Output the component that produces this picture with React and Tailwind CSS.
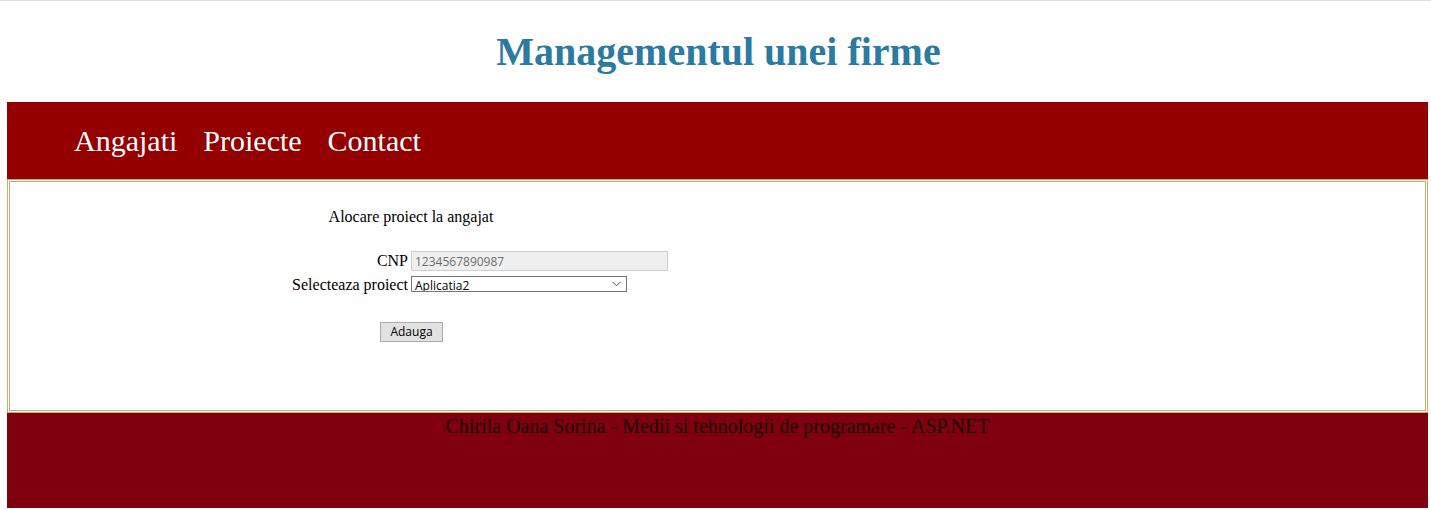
import React from 'react';

const serif = "font-['Liberation_Serif','Times_New_Roman',serif]";
const sans = "font-['Open_Sans','Noto_Sans',sans-serif]";

function Field({ label, children }) {
  return (
    <div className="flex items-baseline">
      <span className="w-[120px] shrink-0 whitespace-nowrap text-right text-[16px] leading-none pr-[3px]">{label}</span>
      {children}
    </div>
  );
}

export default function App() {
  return (
    <div className={`min-h-screen bg-white border-t border-[#dedede] ${serif}`}>
      {/* titlu */}
      <header className="h-[101px] pt-[31px] pl-[6px] text-center">
        <h1 className="text-[40px] leading-none font-bold text-[#2b7aa1]">Managementul unei firme</h1>
      </header>

      <div className="pl-[7px] pr-[3px]">
        {/* meniu */}
        <nav className="h-[77px] bg-[#940000] pt-[24px] pl-[67px] flex gap-[26px] text-[30px] leading-none text-white">
          <a href="#">Angajati</a>
          <a href="#">Proiecte</a>
          <a href="#">Contact</a>
        </nav>

        {/* continut */}
        <main className="h-[234px] border-[3px] border-double border-[#ccab70] pt-[27px] text-black">
          <div className="ml-[281px] w-[240px] text-center text-[16px] leading-none">Alocare proiect la angajat</div>

          <div className="mt-[26px] ml-[281px] flex flex-col gap-[5px]">
            <Field label="CNP">
              <input
                disabled
                value="1234567890987"
                readOnly
                className={`w-[257px] h-[20px] border border-[#cfcfcf] bg-[#efefef] px-[3px] text-[12px] text-[#6d6d6d] ${sans}`}
              />
            </Field>
            <Field label="Selecteaza proiect">
              <div className={`relative w-[216px] h-[16px] border border-[#767676] bg-white overflow-hidden text-[12px] leading-none pl-[3px] pt-[3px] ${sans}`}>
                Aplicatia2
                <svg className="absolute right-[5px] top-[4px]" width="9" height="6" viewBox="0 0 9 6" fill="none">
                  <path d="M0.5 0.8 L4.5 4.8 L8.5 0.8" stroke="#555" strokeWidth="1" />
                </svg>
              </div>
            </Field>
          </div>

          <div className="mt-[29px] ml-[281px] w-[241px] flex justify-center">
            <button className={`w-[63px] h-[20px] border border-[#adadad] bg-[#e1e1e1] text-[12px] leading-none text-black ${sans}`}>
              Adauga
            </button>
          </div>
        </main>

        {/* subsol */}
        <footer className="h-[95px] bg-[#80000f] pt-[3px] text-center text-[20px] leading-none text-[#170000]">
          Chirila Oana Sorina - Medii si tehnologii de programare - ASP.NET
        </footer>
      </div>
    </div>
  );
}
